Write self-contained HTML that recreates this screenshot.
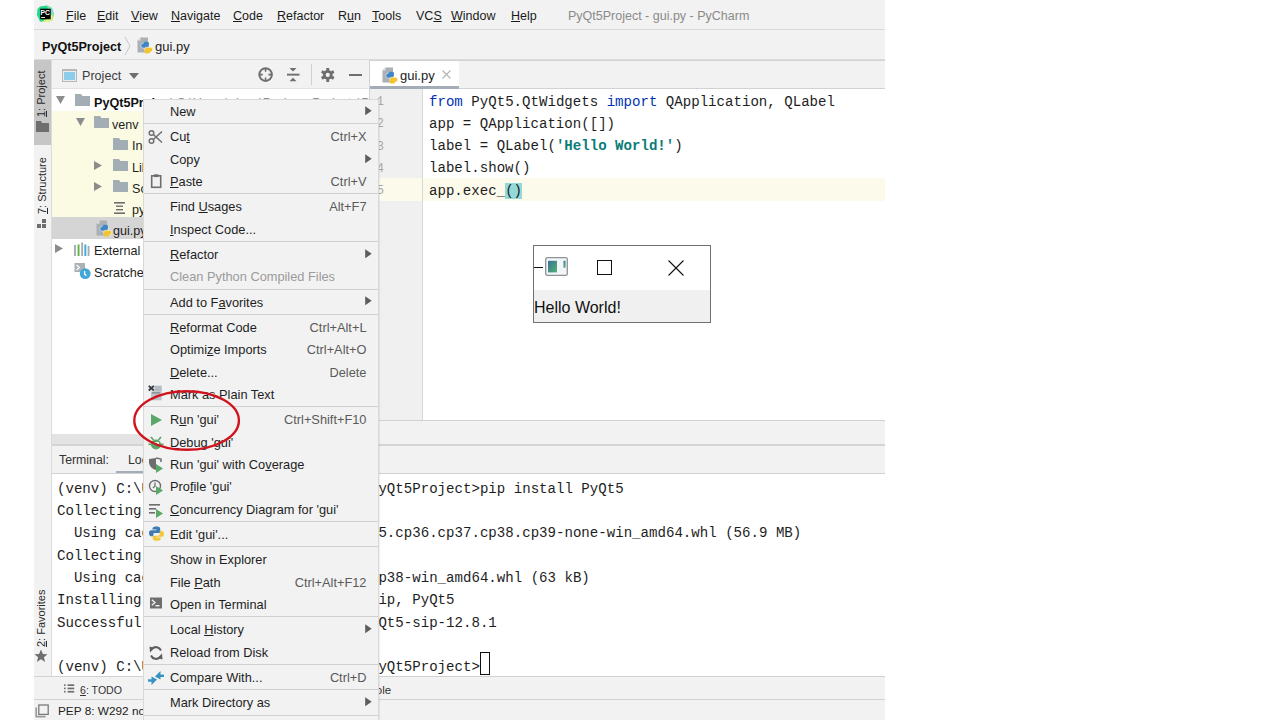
<!DOCTYPE html><html><head><meta charset="utf-8"><style>
*{margin:0;padding:0;box-sizing:border-box}
html,body{width:1280px;height:720px;overflow:hidden;background:#fff;font-family:"Liberation Sans",sans-serif;color:#1e1e1e}
.a{position:absolute}
#ide{position:absolute;left:34px;top:0;width:851px;height:720px;background:#f2f2f2;overflow:hidden}
.hl{position:absolute;height:1px;background:#d6d6d6}
.vl{position:absolute;width:1px;background:#d6d6d6}
.u{text-decoration:underline;text-underline-offset:0.5px;text-decoration-thickness:1px}
.mb{position:absolute;top:0.7px;font-size:12.5px;line-height:30px;color:#1a1a1a;white-space:nowrap}
.mono{position:absolute;font-family:"Liberation Mono",monospace;font-size:14.1px;white-space:pre;color:#1e1e1e;line-height:22px}
.row{position:absolute;margin-top:2.5px;height:22px;font-size:12.6px;line-height:22px;white-space:nowrap;color:#1e1e1e}
.cm{position:absolute;left:143px;top:99px;width:236px;height:640px;background:#f2f2f2;border:1px solid #d9d9d9;box-shadow:1px 1px 1px rgba(0,0,0,.06)}
.it{position:absolute;left:0;width:234px;height:22px;font-size:12.8px;line-height:22px;color:#1e1e1e;white-space:nowrap}
.it .t{position:absolute;left:26px;top:0}
.it .k{position:absolute;right:11.5px;top:0;color:#5a5a5a}
.it .ar{position:absolute;left:220.6px;top:4.8px;width:7px;height:9.5px}
.it .ic{position:absolute;left:4px;top:3px;width:16px;height:16px}
.sep{position:absolute;left:0;width:234px;height:1px;background:#d0d0d0}
.dis{color:#9b9b9b}
.vt{position:absolute;transform:rotate(-90deg);transform-origin:0 0;font-size:11px;white-space:nowrap;color:#2a2a2a}
</style></head><body><div id="ide">
<div class="hl" style="left:0;top:29px;width:851px;background:#dadada"></div>
<div class="mb" style="left:32px"><span class="u">F</span>ile</div>
<div class="mb" style="left:63px"><span class="u">E</span>dit</div>
<div class="mb" style="left:97px"><span class="u">V</span>iew</div>
<div class="mb" style="left:137px"><span class="u">N</span>avigate</div>
<div class="mb" style="left:199px"><span class="u">C</span>ode</div>
<div class="mb" style="left:243px"><span class="u">R</span>efactor</div>
<div class="mb" style="left:304px">R<span class="u">u</span>n</div>
<div class="mb" style="left:338px"><span class="u">T</span>ools</div>
<div class="mb" style="left:382px">VC<span class="u">S</span></div>
<div class="mb" style="left:417px"><span class="u">W</span>indow</div>
<div class="mb" style="left:477px"><span class="u">H</span>elp</div>
<div class="mb" style="left:534px;color:#8a8a8a">PyQt5Project - gui.py - PyCharm</div>
<svg class="a" style="left:2px;top:4px" width="19" height="19" viewBox="0 0 19 19">
<polygon points="4,2.5 11,1.5 16,4 17.8,10 16.5,16 11,18 4,17.5 1,11 1.5,5" fill="#21d789"/>
<polygon points="11,1.5 16,4 17.8,10 16.5,16 11,18 13,10" fill="#7fe2a0"/>
<polygon points="16.5,10 16.5,16 11,18 6,17.5 14,13" fill="#f5f57a"/>
<polygon points="14,3 17,6 17.5,10 14,8" fill="#6fd8e8"/>
<rect x="4.2" y="4.7" width="10.5" height="10.6" fill="#000"/>
<text x="4.6" y="10.6" font-family="Liberation Sans" font-weight="bold" font-size="6.6" fill="#fff" textLength="9.4" lengthAdjust="spacingAndGlyphs">PC</text>
<rect x="5.2" y="13" width="3.8" height="1" fill="#ddd"/>
</svg>
<div class="hl" style="left:0;top:59px;width:851px;background:#dadada"></div>
<div class="a" style="left:8px;top:39.5px;font-size:12.6px;font-weight:bold;color:#111">PyQt5Project</div>
<svg class="a" style="left:90px;top:36px" width="8" height="20"><polyline points="1,1 6,10 1,19" fill="none" stroke="#c8c8c8" stroke-width="1"/></svg>
<div class="a" style="left:103px;top:37px"><svg width="16" height="17" viewBox="0 0 16 17"><polygon points="0.5,3.5 3.5,0.5 11,0.5 11,15.5 0.5,15.5" fill="#aab0b5"/><polygon points="0.5,3.5 3.5,3.5 3.5,0.5" fill="#e3e5e7"/>
<rect x="4" y="6.3" width="8" height="4.8" rx="2" fill="#3f86c6" stroke="#fff" stroke-width="0.5"/><rect x="6.6" y="4.8" width="5.4" height="3.8" rx="1.6" fill="#3f86c6"/>
<rect x="7.6" y="10.3" width="8" height="4.8" rx="2" fill="#f3c631" stroke="#fff" stroke-width="0.5"/><rect x="7.6" y="12.6" width="5.4" height="3.9" rx="1.6" fill="#f3c631"/></svg></div>
<div class="a" style="left:121px;top:39px;font-size:13px;color:#222">gui.py</div>
<div class="vl" style="left:17px;top:60px;height:616px;background:#dcdcdc"></div>
<div class="a" style="left:0;top:60px;width:17px;height:85px;background:#c6c6c6"></div>
<div class="vt" style="left:1px;top:116.5px"><span class="u">1</span>: Project</div>
<svg class="a" style="left:2px;top:121px" width="13" height="11"><path d="M0 0 H5 L6 2 H13 V11 H0 Z" fill="#6e6e6e"/></svg>
<div class="vt" style="left:2px;top:214px"><span class="u">7</span>: Structure</div>
<svg class="a" style="left:2px;top:219px" width="13" height="10"><rect x="6" y="0" width="4" height="4" fill="#6e6e6e"/><rect x="1" y="5" width="4" height="4" fill="#6e6e6e"/><rect x="6" y="5" width="4" height="4" fill="#6e6e6e"/></svg>
<div class="vt" style="left:1px;top:647px"><span class="u">2</span>: Favorites</div>
<svg class="a" style="left:0px;top:649px" width="14" height="14" viewBox="0 0 14 14"><polygon points="7,0.5 8.9,5 13.5,5.2 9.9,8.2 11.1,13 7,10.3 2.9,13 4.1,8.2 0.5,5.2 5.1,5" fill="#6e6e6e"/></svg>
<div class="hl" style="left:18px;top:88px;width:318px;background:#e2e2e2"></div>
<svg class="a" style="left:28px;top:69px" width="15" height="13"><rect x="0" y="0" width="15" height="13" fill="#b8b8b8"/><rect x="1" y="2" width="13" height="10" fill="#e6eef2"/><rect x="2" y="3" width="11" height="8" fill="#8dcdec"/></svg>
<div class="a" style="left:48px;top:69px;font-size:12.6px;color:#3c3c3c">Project</div>
<svg class="a" style="left:95px;top:73px" width="10" height="6"><polygon points="0,0 10,0 5,6" fill="#6e6e6e"/></svg>
<svg class="a" style="left:224px;top:67px" width="16" height="16" viewBox="0 0 16 16"><circle cx="7.6" cy="7.6" r="6.3" fill="none" stroke="#6e6e6e" stroke-width="2"/>
<path d="M7.6 1.5 V4.8 M7.6 10.4 V13.7 M1.5 7.6 H4.8 M10.4 7.6 H13.7" stroke="#6e6e6e" stroke-width="1.6"/></svg>
<svg class="a" style="left:252px;top:67px" width="14" height="16" viewBox="0 0 14 16"><path d="M1 7.65 H13.5" stroke="#6e6e6e" stroke-width="1.9"/>
<polygon points="3.5,1 10.5,1 7,4.6" fill="#6e6e6e"/><polygon points="3.5,14.3 10.5,14.3 7,10.8" fill="#6e6e6e"/></svg>
<div class="a" style="left:276.5px;top:64px;width:1.3px;height:20.5px;background:#cfcfcf"></div>
<svg class="a" style="left:286px;top:67px" width="16" height="16" viewBox="0 0 16 16"><g fill="#6e6e6e"><circle cx="7.75" cy="7.9" r="4.9"/>
<rect x="6.25" y="0.9" width="3" height="14" rx="0.6"/><rect x="6.25" y="0.9" width="3" height="14" rx="0.6" transform="rotate(60 7.75 7.9)"/><rect x="6.25" y="0.9" width="3" height="14" rx="0.6" transform="rotate(-60 7.75 7.9)"/></g><circle cx="7.75" cy="7.9" r="2.1" fill="#f2f2f2"/></svg>
<div class="a" style="left:315px;top:74px;width:13px;height:2px;background:#6e6e6e"></div>
<div class="a" style="left:18px;top:89px;width:318px;height:345px;background:#fff"></div>
<div class="a" style="left:18px;top:111px;width:318px;height:106px;background:#fbfbe4"></div>
<div class="a" style="left:18px;top:217px;width:318px;height:22px;background:#d5d5d5"></div>
<div class="a" style="left:18px;top:434px;width:318px;height:10px;background:#e3e3e3"></div>
<div class="a" style="left:18px;top:444px;width:833px;height:2px;background:#d4d4d4"></div>
<svg class="a" style="left:22px;top:96px" width="9" height="8"><polygon points="0,0 9,0 4.5,8" fill="#8c8c8c"/></svg>
<svg class="a" style="left:41px;top:94px" width="15" height="12"><path d="M0 0 H6 L7.5 2 H15 V12 H0 Z" fill="#a2adb4"/></svg>
<div class="row" style="left:60px;top:89px"><b style="color:#111">PyQt5Project</b> <span style="color:#8c8c8c">C:\Users\alexa\PycharmProjects\PyQt5Project</span></div>
<svg class="a" style="left:42px;top:118px" width="9" height="8"><polygon points="0,0 9,0 4.5,8" fill="#8c8c8c"/></svg>
<svg class="a" style="left:60px;top:116px" width="15" height="12"><path d="M0 0 H6 L7.5 2 H15 V12 H0 Z" fill="#a2adb4"/></svg>
<div class="row" style="left:78px;top:111px">venv</div>
<svg class="a" style="left:79px;top:137.5px" width="15" height="12"><path d="M0 0 H6 L7.5 2 H15 V12 H0 Z" fill="#a2adb4"/></svg>
<div class="row" style="left:98px;top:132.5px">Include</div>
<svg class="a" style="left:60px;top:160.5px" width="8" height="9"><polygon points="0,0 8,4.5 0,9" fill="#8c8c8c"/></svg>
<svg class="a" style="left:79px;top:159px" width="15" height="12"><path d="M0 0 H6 L7.5 2 H15 V12 H0 Z" fill="#a2adb4"/></svg>
<div class="row" style="left:98px;top:154px">Lib</div>
<svg class="a" style="left:60px;top:181.5px" width="8" height="9"><polygon points="0,0 8,4.5 0,9" fill="#8c8c8c"/></svg>
<svg class="a" style="left:79px;top:180px" width="15" height="12"><path d="M0 0 H6 L7.5 2 H15 V12 H0 Z" fill="#a2adb4"/></svg>
<div class="row" style="left:98px;top:175px">Scripts</div>
<svg class="a" style="left:80px;top:201.5px" width="11" height="12"><g fill="#6e6e6e"><rect x="0" y="0" width="11" height="1.6"/><rect x="2" y="3.5" width="7" height="1.4"/><rect x="2" y="7" width="7" height="1.4"/><rect x="0" y="10.4" width="11" height="1.6"/></g></svg>
<div class="row" style="left:98px;top:196.5px">pyvenv.cfg</div>
<div class="a" style="left:62px;top:219.5px"><svg width="16" height="17" viewBox="0 0 16 17"><polygon points="0.5,3.5 3.5,0.5 11,0.5 11,15.5 0.5,15.5" fill="#aab0b5"/><polygon points="0.5,3.5 3.5,3.5 3.5,0.5" fill="#e3e5e7"/>
<rect x="4" y="6.3" width="8" height="4.8" rx="2" fill="#3f86c6" stroke="#fff" stroke-width="0.5"/><rect x="6.6" y="4.8" width="5.4" height="3.8" rx="1.6" fill="#3f86c6"/>
<rect x="7.6" y="10.3" width="8" height="4.8" rx="2" fill="#f3c631" stroke="#fff" stroke-width="0.5"/><rect x="7.6" y="12.6" width="5.4" height="3.9" rx="1.6" fill="#f3c631"/></svg></div>
<div class="row" style="left:79px;top:217.5px">gui.py</div>
<svg class="a" style="left:21px;top:244.0px" width="8" height="9"><polygon points="0,0 8,4.5 0,9" fill="#8c8c8c"/></svg>
<svg class="a" style="left:40px;top:241.5px" width="16" height="14"><rect x="0" y="3" width="1.9" height="11" fill="#a5adb3"/><rect x="3.6" y="2.5" width="1.9" height="11.5" fill="#62b543"/><rect x="7.2" y="0.5" width="1.9" height="13.5" fill="#a5adb3"/><rect x="10.4" y="2.5" width="1.9" height="11.5" fill="#40a8d8"/><rect x="13.6" y="4" width="1.9" height="10" fill="#a5adb3"/></svg>
<div class="row" style="left:60px;top:237.5px">External Libraries</div>
<svg class="a" style="left:40px;top:263px" width="18" height="18"><rect x="0.5" y="0" width="10.5" height="9" fill="#aab2b8"/><path d="M2.5 2 L5.5 4.5 L2.5 7" stroke="#fff" stroke-width="1.2" fill="none"/><circle cx="11.2" cy="10.6" r="5.4" fill="#40a8d8"/><path d="M10.6 8 V11 L12.3 12.8" stroke="#fff" stroke-width="1.3" fill="none"/></svg>
<div class="row" style="left:60px;top:259px">Scratches and Consoles</div>
<div class="vl" style="left:335px;top:60px;height:384px;background:#d2d2d2"></div>
<div class="hl" style="left:336px;top:60px;width:515px;background:#d2d2d2"></div>
<div class="a" style="left:336px;top:61px;width:89px;height:25px;background:#fff"></div>
<div class="a" style="left:336px;top:86px;width:89px;height:3px;background:#a4acb8"></div>
<div class="hl" style="left:425px;top:88px;width:426px;background:#d2d2d2"></div>
<div class="a" style="left:348px;top:67px"><svg width="16" height="17" viewBox="0 0 16 17"><polygon points="0.5,3.5 3.5,0.5 11,0.5 11,15.5 0.5,15.5" fill="#aab0b5"/><polygon points="0.5,3.5 3.5,3.5 3.5,0.5" fill="#e3e5e7"/>
<rect x="4" y="6.3" width="8" height="4.8" rx="2" fill="#3f86c6" stroke="#fff" stroke-width="0.5"/><rect x="6.6" y="4.8" width="5.4" height="3.8" rx="1.6" fill="#3f86c6"/>
<rect x="7.6" y="10.3" width="8" height="4.8" rx="2" fill="#f3c631" stroke="#fff" stroke-width="0.5"/><rect x="7.6" y="12.6" width="5.4" height="3.9" rx="1.6" fill="#f3c631"/></svg></div>
<div class="a" style="left:366px;top:68px;font-size:13px;color:#222">gui.py</div>
<svg class="a" style="left:408px;top:70px" width="9" height="9"><path d="M0.5 0.5 L8.5 8.5 M8.5 0.5 L0.5 8.5" stroke="#b4b4b4" stroke-width="1.1"/></svg>
<div class="a" style="left:336px;top:89px;width:53px;height:331px;background:#f0f0f0"></div>
<div class="a" style="left:336px;top:178px;width:515px;height:23px;background:#fcfaea"></div>
<div class="vl" style="left:388px;top:89px;height:331px;background:#d8d8d8"></div>
<div class="a" style="left:389px;top:89px;width:462px;height:89px;background:#fff"></div>
<div class="a" style="left:389px;top:201px;width:462px;height:219px;background:#fff"></div>
<div class="hl" style="left:336px;top:420px;width:515px;background:#d2d2d2"></div>
<div class="mono" style="left:335px;top:91.0px;width:15px;text-align:right;color:#a8a8a8;font-size:12px">1</div>
<div class="mono" style="left:335px;top:113.3px;width:15px;text-align:right;color:#a8a8a8;font-size:12px">2</div>
<div class="mono" style="left:335px;top:135.6px;width:15px;text-align:right;color:#a8a8a8;font-size:12px">3</div>
<div class="mono" style="left:335px;top:157.9px;width:15px;text-align:right;color:#a8a8a8;font-size:12px">4</div>
<div class="mono" style="left:335px;top:180.2px;width:15px;text-align:right;color:#a8a8a8;font-size:12px">5</div>
<div class="mono" style="left:395px;top:90.5px"><span style="color:#0033b3">from</span> PyQt5.QtWidgets <span style="color:#0033b3">import</span> QApplication, QLabel</div>
<div class="mono" style="left:395px;top:112.8px">app = QApplication([])</div>
<div class="mono" style="left:395px;top:135.1px">label = QLabel(<span style="color:#0b7d78;font-weight:bold">'Hello World!'</span>)</div>
<div class="mono" style="left:395px;top:157.4px">label.show()</div>
<div class="mono" style="left:395px;top:179.7px">app.exec_<span style="background:#93d9d9">()</span></div>
<div class="a" style="left:25px;top:453px;font-size:12.3px;color:#333">Terminal:</div>
<div class="a" style="left:94px;top:453px;font-size:12.3px;color:#333">Local</div>
<div class="a" style="left:82px;top:471px;width:60px;height:3px;background:#a4acb8"></div>
<div class="hl" style="left:18px;top:473px;width:833px;background:#d2d2d2"></div>
<div class="a" style="left:18px;top:474px;width:833px;height:202px;background:#fff"></div>
<div class="mono" style="left:23px;top:477.8px">(venv) C:\Users\alex\PycharmProjects\PyQt5Project>pip install PyQt5</div>
<div class="mono" style="left:23px;top:500.1px">Collecting PyQt5</div>
<div class="mono" style="left:23px;top:522.4px">  Using cached PyQt5-5.15.1-5.15.1-cp35.cp36.cp37.cp38.cp39-none-win_amd64.whl (56.9 MB)</div>
<div class="mono" style="left:23px;top:544.7px">Collecting PyQt5-sip&lt;13,&gt;=12.8</div>
<div class="mono" style="left:23px;top:567.0px">  Using cached PyQt5_sip-12.8.1-cp38-cp38-win_amd64.whl (63 kB)</div>
<div class="mono" style="left:23px;top:589.3px">Installing collected packages: PyQt5-sip, PyQt5</div>
<div class="mono" style="left:23px;top:611.6px">Successfully installed PyQt5-5.15.1 PyQt5-sip-12.8.1</div>
<div class="mono" style="left:23px;top:633.9px"></div>
<div class="mono" style="left:23px;top:656.2px">(venv) C:\Users\alex\PycharmProjects\PyQt5Project></div>
<div class="a" style="left:446px;top:652.3px;width:9.5px;height:22.3px;border:1.4px solid #111"></div>
<div class="hl" style="left:0;top:676px;width:851px;background:#d2d2d2"></div>
<svg class="a" style="left:30px;top:684px" width="11" height="9"><g fill="#6e6e6e"><rect x="0" y="0.3" width="1.6" height="1.6"/><rect x="3.6" y="0.3" width="6.6" height="1.7"/><rect x="0" y="3.6" width="1.6" height="1.6"/><rect x="3.6" y="3.6" width="6.6" height="1.7"/><rect x="0" y="6.9" width="1.6" height="1.6"/><rect x="3.6" y="6.9" width="6.6" height="1.7"/></g></svg>
<div class="a" style="left:46px;top:684px;font-size:10.6px;color:#333"><span class="u">6</span>: TODO</div>
<div class="a" style="left:276px;top:684px;font-size:11.5px;color:#333">Python Console</div>
<div class="hl" style="left:0;top:699px;width:851px;background:#d2d2d2"></div>
<svg class="a" style="left:1px;top:704px" width="14" height="14"><rect x="3.8" y="1" width="9.4" height="9.4" fill="none" stroke="#7a7a7a" stroke-width="1.3"/><path d="M1.2 3.5 V12.6 H10.5" fill="none" stroke="#9a9a9a" stroke-width="1.6"/></svg>
<div class="a" style="left:24px;top:703.8px;font-size:11.8px;color:#222">PEP 8: W292 no newline at end of file</div>
</div>
<div class="a" style="left:533px;top:245px;width:178px;height:78px;border:1px solid #707070;background:#fff">
<div class="a" style="left:0;top:44px;width:176px;height:32px;background:#f0f0f0"></div>
<div class="a" style="left:0;top:21px;width:9px;height:1.2px;background:#111"></div>
<svg class="a" style="left:11px;top:11px" width="23" height="19"><defs><linearGradient id="g1" x1="0" y1="0" x2="1" y2="1"><stop offset="0" stop-color="#3b6f9a"/><stop offset="1" stop-color="#4fb36e"/></linearGradient><linearGradient id="g2" x1="0" y1="0" x2="0" y2="1"><stop offset="0" stop-color="#2f7f8f"/><stop offset="1" stop-color="#5aa889"/></linearGradient></defs><rect x="0.7" y="0.7" width="21.6" height="17.6" rx="1.6" fill="#f3f6f8" stroke="#8e9398" stroke-width="1.3"/><rect x="3" y="3.8" width="9" height="11.6" fill="url(#g1)"/><rect x="18.5" y="3.8" width="2" height="7" fill="url(#g2)"/></svg>
<div class="a" style="left:63px;top:14px;width:15px;height:15px;border:1.2px solid #111"></div>
<svg class="a" style="left:134px;top:14px" width="16" height="16"><path d="M0.5 0.5 L15.5 15.5 M15.5 0.5 L0.5 15.5" stroke="#111" stroke-width="1.1"/></svg>
<div class="a" style="left:0px;top:53px;font-size:16px;color:#111">Hello World!</div>
</div>
<div class="cm">
<div class="it" style="top:1.1px"><span class="t">New</span><svg class="ar" viewBox="0 0 7 9.5"><polygon points="0.2,0.2 6.7,4.75 0.2,9.3" fill="#5e5e5e"/></svg></div>
<div class="sep" style="top:23.2px"></div>
<div class="it" style="top:26.4px"><svg class="ic" viewBox="0 0 16 16"><g fill="none" stroke="#6e6e6e" stroke-width="1.5"><circle cx="3.5" cy="4" r="2.3"/><circle cx="3.5" cy="12" r="2.3"/><path d="M5.3 5.5 L14 13.5 M5.3 10.5 L14 2.5"/></g></svg><span class="t">Cu<span class="u">t</span></span><span class="k">Ctrl+X</span></div>
<div class="it" style="top:48.8px"><span class="t">Copy</span><svg class="ar" viewBox="0 0 7 9.5"><polygon points="0.2,0.2 6.7,4.75 0.2,9.3" fill="#5e5e5e"/></svg></div>
<div class="it" style="top:71.1px"><svg class="ic" viewBox="0 0 16 16"><rect x="3.7" y="1.8" width="9" height="11.5" fill="none" stroke="#6e6e6e" stroke-width="1.6"/><rect x="6" y="0.3" width="4.5" height="2.8" fill="#6e6e6e"/></svg><span class="t"><span class="u">P</span>aste</span><span class="k">Ctrl+V</span></div>
<div class="sep" style="top:93.2px"></div>
<div class="it" style="top:96.4px"><span class="t">Find <span class="u">U</span>sages</span><span class="k">Alt+F7</span></div>
<div class="it" style="top:118.8px"><span class="t"><span class="u">I</span>nspect Code...</span></div>
<div class="sep" style="top:140.9px"></div>
<div class="it" style="top:144.1px"><span class="t"><span class="u">R</span>efactor</span><svg class="ar" viewBox="0 0 7 9.5"><polygon points="0.2,0.2 6.7,4.75 0.2,9.3" fill="#5e5e5e"/></svg></div>
<div class="it dis" style="top:166.4px"><span class="t">Clean Python Compiled Files</span></div>
<div class="sep" style="top:188.5px"></div>
<div class="it" style="top:191.7px"><span class="t">Add to F<span class="u">a</span>vorites</span><svg class="ar" viewBox="0 0 7 9.5"><polygon points="0.2,0.2 6.7,4.75 0.2,9.3" fill="#5e5e5e"/></svg></div>
<div class="sep" style="top:213.9px"></div>
<div class="it" style="top:217.1px"><span class="t"><span class="u">R</span>eformat Code</span><span class="k">Ctrl+Alt+L</span></div>
<div class="it" style="top:239.4px"><span class="t">Optimi<span class="u">z</span>e Imports</span><span class="k">Ctrl+Alt+O</span></div>
<div class="it" style="top:261.7px"><span class="t"><span class="u">D</span>elete...</span><span class="k">Delete</span></div>
<div class="it" style="top:284.1px"><svg class="ic" style="top:1px" viewBox="0 0 16 16"><rect x="5" y="0.7" width="8.7" height="6" fill="#b3bcc2"/><rect x="3" y="6.5" width="10.7" height="8.8" fill="#bcc4c9"/><rect x="4" y="7" width="8" height="1.6" fill="#8a949a"/><rect x="0" y="0" width="6.7" height="6.3" fill="#e8e8e8"/><path d="M0.8 0.8 L5.9 5.5 M5.9 0.8 L0.8 5.5" stroke="#333b40" stroke-width="1.8"/></svg><span class="t">Mark as Plain Text</span></div>
<div class="sep" style="top:306.2px"></div>
<div class="it" style="top:309.4px"><svg class="ic" viewBox="0 0 16 16"><polygon points="3,2 14,8 3,14" fill="#59a869"/></svg><span class="t">R<span class="u">u</span>n 'gui'</span><span class="k">Ctrl+Shift+F10</span></div>
<div class="it" style="top:331.7px"><svg class="ic" viewBox="0 0 16 16"><g fill="#59a869"><ellipse cx="8" cy="9.5" rx="5" ry="5"/><path d="M3 2 L5.5 5 M13 2 L10.5 5" stroke="#59a869" stroke-width="1.6"/><rect x="0.5" y="8.5" width="15" height="1.6"/></g><rect x="5" y="7" width="6" height="2" fill="#f2f2f2"/></svg><span class="t"><span class="u">D</span>ebug 'gui'</span></div>
<div class="it" style="top:354.0px"><svg class="ic" viewBox="0 0 16 16"><path d="M1 2 L8 1 L8 13 C4 12 1 9 1 5 Z" fill="#6e6e6e"/><path d="M8 1 L13 2 L13 5" fill="none" stroke="#6e6e6e" stroke-width="1.5"/><polygon points="8,7 15,11.5 8,16" fill="#59a869"/></svg><span class="t">Run 'gui' with Co<span class="u">v</span>erage</span></div>
<div class="it" style="top:376.4px"><svg class="ic" viewBox="0 0 16 16"><circle cx="7" cy="7" r="5.5" fill="none" stroke="#6e6e6e" stroke-width="1.4"/><path d="M7 3.5 V7 L5 9" stroke="#6e6e6e" stroke-width="1.3" fill="none"/><polygon points="8,7 15,11.5 8,16" fill="#59a869"/></svg><span class="t">Pro<span class="u">f</span>ile 'gui'</span></div>
<div class="it" style="top:398.7px"><svg class="ic" viewBox="0 0 16 16"><g fill="#6e6e6e"><rect x="1" y="2" width="11" height="1.6"/><rect x="1" y="6" width="7" height="1.6"/><rect x="1" y="10" width="6" height="1.6"/></g><polygon points="8,7 15,11.5 8,16" fill="#59a869"/></svg><span class="t"><span class="u">C</span>oncurrency Diagram for 'gui'</span></div>
<div class="sep" style="top:420.8px"></div>
<div class="it" style="top:424.0px"><svg class="ic" style="left:3.5px;top:1.3px;width:17px;height:17px" viewBox="0 0 16 16"><path d="M4 6 C4 2 5 1.5 8 1.5 C11 1.5 11.5 2.5 11.5 4 L11.5 7.5 L6.5 7.5 C5.5 7.5 5 8 5 9 L5 10.5 L3 10.5 C1.5 10.5 1 9 1 7.5 C1 6 1.5 5 3 5 L8 5 L8 4.2 L4 4.2 Z" fill="#3d7ab8"/><path d="M12 5.5 C14 5.5 15 6.5 15 8.5 C15 10 14.5 11 13 11 L8 11 L8 11.8 L12 11.8 L12 12.5 C12 14.5 11 14.8 8 14.8 C5 14.8 4.5 14 4.5 12.5 L4.5 10 L9.5 10 C10.5 10 11 9.5 11 8.5 L11 5.5 Z" fill="#f2c73a"/></svg><span class="t">Edit 'gui'...</span></div>
<div class="sep" style="top:446.2px"></div>
<div class="it" style="top:449.4px"><span class="t">Show in Explorer</span></div>
<div class="it" style="top:471.7px"><span class="t">File <span class="u">P</span>ath</span><span class="k">Ctrl+Alt+F12</span></div>
<div class="it" style="top:494.0px"><svg class="ic" viewBox="0 0 16 16"><rect x="2" y="0.5" width="12" height="11" fill="#6e6e6e"/><path d="M3.8 2.8 L7 5.5 L3.8 8.2" stroke="#f2f2f2" stroke-width="1.3" fill="none"/><rect x="7.5" y="8" width="4" height="1.4" fill="#f2f2f2"/></svg><span class="t">Open in Terminal</span></div>
<div class="sep" style="top:516.2px"></div>
<div class="it" style="top:519.4px"><span class="t">Local <span class="u">H</span>istory</span><svg class="ar" viewBox="0 0 7 9.5"><polygon points="0.2,0.2 6.7,4.75 0.2,9.3" fill="#5e5e5e"/></svg></div>
<div class="it" style="top:541.7px"><svg class="ic" viewBox="0 0 16 16"><g fill="none" stroke="#5e5e5e" stroke-width="2"><path d="M13 5.5 A5.5 5.5 0 0 0 4 3.8"/><path d="M3 10.5 A5.5 5.5 0 0 0 12 12.2"/></g><polygon points="1.5,1.5 6.5,3 2,7.5" fill="#5e5e5e"/><polygon points="14.5,14.5 9.5,13 14,8.5" fill="#5e5e5e"/></svg><span class="t">Reload from Disk</span></div>
<div class="sep" style="top:563.8px"></div>
<div class="it" style="top:567.0px"><svg class="ic" viewBox="0 0 16 16"><g fill="#3592c4"><polygon points="7,6.5 12.5,1 12.5,9.5"/><rect x="11.5" y="4.6" width="4.5" height="2.4"/><polygon points="9,9.5 3.5,15 3.5,6.5"/><rect x="0" y="9.3" width="4.5" height="2.4"/></g></svg><span class="t">Compare With...</span><span class="k">Ctrl+D</span></div>
<div class="sep" style="top:589.1px"></div>
<div class="it" style="top:592.3px"><span class="t">Mark Directory as</span><svg class="ar" viewBox="0 0 7 9.5"><polygon points="0.2,0.2 6.7,4.75 0.2,9.3" fill="#5e5e5e"/></svg></div>
<div class="sep" style="top:614.5px"></div>
</div>
<svg class="a" style="left:0;top:0" width="1280" height="720"><ellipse cx="186.6" cy="420.5" rx="52.3" ry="29.3" fill="none" stroke="#d0141e" stroke-width="2.4"/></svg></body></html>
